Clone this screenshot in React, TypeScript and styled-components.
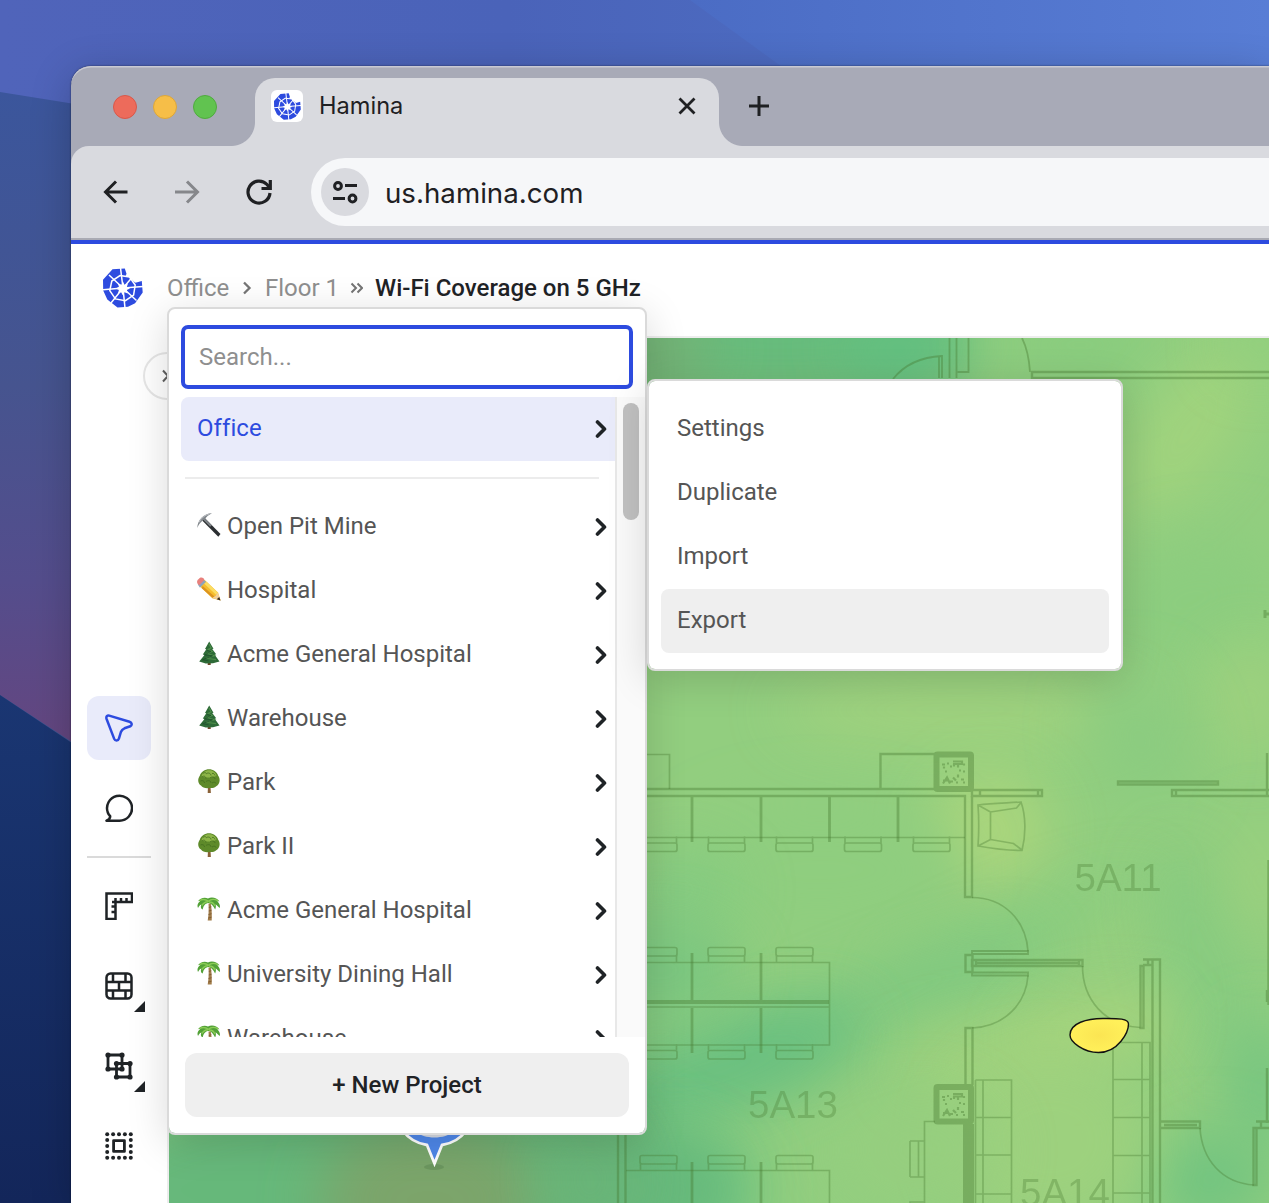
import React from "react";
import styled, { createGlobalStyle, css } from "styled-components";

const GlobalStyle = createGlobalStyle`
  *, *::before, *::after { box-sizing: border-box; }
  body { margin: 0; font-family: Roboto, "Liberation Sans", sans-serif; overflow: hidden; }
  svg { display: block; flex: none; }
  button { font: inherit; border: 0; background: none; padding: 0; }
`;

const colors = {
  brand: "#2d4bdf",
  brandSoft: "#e9ebfa",
  ink: "#1f2326",
  text: "#555555",
  muted: "#8f8f8f",
  line: "#dadada",
};

/* ---------- Desktop and browser window ---------- */

const Desktop = styled.div`
  position: relative;
  display: flex;
  width: 1269px;
  height: 1203px;
  padding: 66px 0 0 71px;
  overflow: hidden;
  background: #3d5592;
`;

const Wallpaper = styled.svg`
  position: absolute;
  inset: 0;
`;

const BrowserWindow = styled.div`
  position: relative;
  flex: 1;
  display: flex;
  flex-direction: column;
  border-radius: 20px 0 0 0;
  background: #a8aab7;
  box-shadow: 0 0 2px rgba(0, 0, 0, 0.55), 0 8px 40px rgba(0, 0, 0, 0.22);
`;

const TabStrip = styled.div`
  display: flex;
  height: 80px;
  padding: 12px 0 0 42px;
  border-radius: 20px 0 0 0;
  box-shadow: inset 0 2px 0 -0.5px #c9cad3;
`;

const TrafficLights = styled.div`
  display: flex;
  gap: 16px;
  width: 142px;
  padding-top: 17px;
`;

const Light = styled.span<{ $fill: string; $edge: string }>`
  width: 24px;
  height: 24px;
  border-radius: 50%;
  border: 1px solid ${(p) => p.$edge};
  background: ${(p) => p.$fill};
`;

const Tab = styled.div`
  position: relative;
  display: flex;
  align-items: center;
  width: 464px;
  height: 68px;
  padding: 0 20px 12px 16px;
  border-radius: 20px 20px 0 0;
  background: #d9dadf;

  &::before,
  &::after {
    content: "";
    position: absolute;
    bottom: 0;
    width: 24px;
    height: 24px;
  }
  &::before {
    left: -24px;
    background: radial-gradient(circle at 0 0, transparent 23.5px, #d9dadf 24.5px);
  }
  &::after {
    right: -24px;
    background: radial-gradient(circle at 100% 0, transparent 23.5px, #d9dadf 24.5px);
  }
`;

const Favicon = styled.span`
  display: grid;
  place-items: center;
  width: 32px;
  height: 32px;
  border-radius: 6px;
  background: #fff;
`;

const TabTitle = styled.span`
  flex: 1;
  margin-left: 16px;
  font: 400 23.6px/32px Inter, sans-serif;
  color: #1f2023;
`;

const NewTab = styled.button`
  width: 24px;
  height: 24px;
  margin: 16px 0 0 28px;
`;

const Toolbar = styled.div`
  display: flex;
  align-items: center;
  height: 94px;
  padding-left: 30px;
  border-bottom: 2px solid #a9aab3;
  border-radius: 18px 0 0 0;
  background: #d9dadf;
`;

const NavIcons = styled.div`
  display: flex;
  gap: 44px;
  width: 210px;
`;

const AddressBar = styled.div`
  flex: 1;
  display: flex;
  align-items: center;
  height: 68px;
  padding-left: 10px;
  border-radius: 34px 0 0 34px;
  background: #f6f7f9;
`;

const SiteInfo = styled.span`
  display: grid;
  place-items: center;
  width: 48px;
  height: 48px;
  border-radius: 50%;
  background: #d9dadf;
`;

const Url = styled.span`
  margin-left: 16px;
  padding-top: 1px;
  font: 400 27.7px/36px Inter, sans-serif;
  color: #1f2023;
`;

/* ---------- Application shell ---------- */

const AppShell = styled.div`
  position: relative;
  flex: 1;
  display: flex;
  flex-direction: column;
  border-top: 4px solid ${colors.brand};
  background: #fff;
`;

const Header = styled.header`
  display: flex;
  align-items: center;
  height: 92px;
  padding: 0 0 4px 32px;
`;

const Breadcrumbs = styled.nav`
  display: flex;
  align-items: center;
  margin-left: 24px;
  font-size: 24px;
  line-height: 32px;
  color: ${colors.muted};
`;

const Crumb = styled.span<{ $current?: boolean; $width: number }>`
  width: ${(p) => p.$width}px;
  white-space: nowrap;
  ${(p) =>
    p.$current &&
    css`
      font-weight: 500;
      color: ${colors.ink};
    `}
`;

const CrumbMark = styled.svg`
  margin: 0 12px;
`;

const Body = styled.div`
  flex: 1;
  display: flex;
  min-height: 0;
`;

const Sidebar = styled.aside`
  position: relative;
  display: flex;
  flex-direction: column;
  align-items: center;
  gap: 16px;
  width: 98px;
  padding: 360px 0 0;
  border-right: 2px solid #ededed;
`;

const Tool = styled.button<{ $active?: boolean }>`
  position: relative;
  display: grid;
  place-items: center;
  flex: none;
  width: 64px;
  height: 64px;
  border-radius: 12px;
  color: ${(p) => (p.$active ? colors.brand : colors.ink)};
  background: ${(p) => (p.$active ? colors.brandSoft : "transparent")};
`;

const MoreCorner = styled.span`
  position: absolute;
  right: 6px;
  bottom: 6px;
  width: 11px;
  height: 11px;
  background: ${colors.ink};
  clip-path: polygon(100% 0, 100% 100%, 0 100%);
`;

const ToolDivider = styled.hr`
  width: 64px;
  height: 2px;
  margin: 0;
  border: 0;
  background: ${colors.line};
`;

const ExpandButton = styled.button`
  position: absolute;
  top: 16px;
  left: 72px;
  display: grid;
  place-items: center;
  width: 48px;
  height: 48px;
  border: 2px solid #e6e6e6;
  border-radius: 50%;
  background: #fff;
`;

/* ---------- Menus ---------- */

const menuSurface = css`
  position: absolute;
  border: 2px solid ${colors.line};
  border-radius: 8px;
  background: #fff;
  background-clip: padding-box;
`;

const ProjectMenu = styled.div`
  ${menuSurface}
  top: 63px;
  left: 96px;
  display: flex;
  flex-direction: column;
  width: 480px;
  height: 828px;
  padding: 16px 0 16px 12px;
  box-shadow: 0 8px 40px rgba(0, 0, 0, 0.15);
`;

const SearchInput = styled.input`
  flex: none;
  width: 452px;
  height: 64px;
  padding: 0 14px;
  border: 4px solid ${colors.brand};
  border-radius: 7px;
  outline: 0;
  font: 400 24px/32px Roboto, sans-serif;
  background: #fff;
  &::placeholder { color: ${colors.muted}; opacity: 1; }
`;

const ScrollArea = styled.div`
  display: flex;
  height: 640px;
  margin-top: 8px;
  overflow: hidden;
`;

const ProjectList = styled.div`
  width: 434px;
`;

const ScrollTrack = styled.div`
  flex: 1;
  padding: 6px 0 0 6px;
  border-left: 2px solid #e8e8e8;
  background: #fafafa;
`;

const ScrollThumb = styled.div`
  width: 16px;
  height: 117px;
  border-radius: 8px;
  background: #c1c1c1;
`;

const MenuRow = styled.div<{ $tone?: "selected" | "hover" }>`
  display: flex;
  align-items: center;
  height: 64px;
  padding: 0 8px 2px 16px;
  border-radius: ${(p) => (p.$tone === "selected" ? "8px 0 0 8px" : "8px")};
  font-size: 24px;
  line-height: 32px;
  letter-spacing: ${(p) => (p.$tone === "selected" ? "0.08px" : "0")};
  color: ${(p) => (p.$tone === "selected" ? colors.brand : colors.text)};
  background: ${(p) =>
    p.$tone === "selected" ? colors.brandSoft : p.$tone === "hover" ? "#efefef" : "transparent"};
`;

const RowLabel = styled.span`
  flex: 1;
  white-space: nowrap;
`;

const RowIcon = styled.svg`
  width: 24px;
  height: 24px;
  margin: 0 6px 2px 0;
`;

const ListDivider = styled.hr`
  width: 414px;
  height: 2px;
  margin: 16px 0 16px 4px;
  border: 0;
  background: #ececec;
`;

const NewProject = styled.button`
  width: 444px;
  height: 64px;
  flex: none;
  margin: 16px 0 0 4px;
  border-radius: 12px;
  background: #efefef;
  font: 500 24px/32px Roboto, sans-serif;
  color: ${colors.ink};
`;

const ActionMenu = styled.div`
  ${menuSurface}
  top: 135px;
  left: 576px;
  width: 476px;
  padding: 16px 12px;
  box-shadow: 0 8px 40px rgba(0, 0, 0, 0.15);
`;

/* ---------- Icons ---------- */

const HaminaMark = ({ size }: { size: number }) => (
  <svg width={size} height={size} viewBox="0 0 40 40">
    <path
      d="M9.500 1.300 21.800.4l1.700 5.300-1 2.800 3.500.3 4.800 4.700 1.700 1.200 6.300-1.700.9 11.500-7.600 10.700L25 38.800l-10.500.8L4.300 31.500.2 22.500 0 11.800z"
      fill={colors.brand}
    />
    <g fill="none" stroke="#fff" strokeWidth="1.500">
      <path d="M20 20 17.500 0M20 20 6 7M20 20 0 21.800M20 20 8 35M20 20l2 20M20 20l13.500 12.500M20 20l20-1.500M20 20l9.500-11" />
      <path d="M17 7.600 26.500 9l5.700 8-1.600 10-8.200 5.700-10-1.800-5.600-8.200L8.800 13z" />
    </g>
    <path d="m20 13.500 1.500 3.300 3.400-1.400-1 3.500 3.100 1.500-3.200 1.500 1 3.500-3.400-1.200-1.600 3-1.700-3-3.200 1.200 1-3.500-3.200-1.500 3.200-1.600-.9-3.300 3.400 1.200z" fill="#fff" />
  </svg>
);

const Arrow = ({ flip, color }: { flip?: boolean; color: string }) => (
  <svg width="28" height="28" viewBox="0 0 28 28" fill="none" stroke={color} strokeWidth="3">
    <path d={flip ? "M2 14h22M14 3.500 24.500 14 14 24.500" : "M26.500 14H4.500M15 3.500 4.500 14 15 24.500"} />
  </svg>
);

const RowChevron = () => (
  <svg width="12" height="20" viewBox="0 0 12 20" fill="none" stroke={colors.ink} strokeWidth="3.600" strokeLinecap="round" strokeLinejoin="round">
    <path d="m2.500 4 7 7-7 7" />
  </svg>
);

type EmojiName = "pick" | "pencil" | "pine" | "tree" | "palm";

const Emoji = ({ name }: { name: EmojiName }) => (
  <RowIcon viewBox="0 0 24 24">
    {name === "pick" && (
      <>
        <path d="M7.500 4.800 23.500 21l-2.200 2.800L5.200 7.500z" fill="#2b2e31" />
        <path d="M6.500 5.500 14 13" stroke="#7c8186" strokeWidth="2.200" />
        <path d="M.3 15C.3 7.500 6.500.3 15 .3 11 2.200 9.500 4 8 6 4.800 8 2.300 10 .3 15z" fill="#80868b" />
        <path d="M2 9.500C4 5 8 2 12 1.200" stroke="#c9ccd0" strokeWidth=".8" fill="none" />
      </>
    )}
    {name === "pencil" && (
      <>
        <path d="m7.500 2.800 13.500 12.600 2.700 8-8.400-2.200L2 8.500z" fill="#f6bd2d" />
        <path d="m9.500 4.800 11.500 11-2 2L7 6.600z" fill="#fbdc62" />
        <path d="m4.500 11 11.500 10.200 1.700-1.500L5.700 9z" fill="#dc9420" />
        <path d="m20.800 15.600 2.800 7.900-8.200-2.700 3-1.700z" fill="#f0cf9c" />
        <path d="m22.300 20 1.200 3.500-3.800-1.200z" fill="#33291f" />
        <path d="m6 2.200 3 2.600-6 6L.8 7.500z" fill="#8da4bd" />
        <path d="M3 .8C5-.2 7.300 1.200 7.300 3L2.500 8C.4 7.800-.6 5 .6 3z" fill="#e8807c" />
      </>
    )}
    {name === "pine" && (
      <>
        <path d="M10.700 19h3v5h-3z" fill="#6b4527" />
        <path d="m12.200.5 4.300 7.300-1.300.2 4 5.200-1.500.5 4.800 6.800-6.500 1.700-7.300.2-6.500-2L7.500 14l-1.700-.5L9.300 8.200 8 8z" fill="#2d6a37" />
        <path d="m12 3 2.200 4-3 1.200 4.300 2.300-5.500 2 7.600 2.200-8.500 2.600 10 1.300" fill="none" stroke="#4d8c49" strokeWidth="1.100" />
        <path d="m10 9.500 4 .8-6.500 3.700 8 .8-10 4 6 1" fill="none" stroke="#20502c" strokeWidth=".8" />
      </>
    )}
    {name === "tree" && (
      <>
        <path d="M11 17h2.400l.5 7h-3.200z" fill="#8a6238" />
        <path d="M12 .2c4 0 8 2.600 9.200 6.500 2.500 3.300 1.700 8.200-1.600 10.300-2.300 2.200-5 2.300-7.300 2-3.500.6-6.700-.2-8.300-2.400C.6 14.500.5 9.500 2.800 6.700 4 2.600 8 .2 12 .2z" fill="#5e8a2a" />
        <path d="M12 1.200c3.500 0 6.500 2 7.500 5.300-3 2.500-11 2.700-15 .8C5.500 3.500 8.300 1.200 12 1.200z" fill="#8db548" />
        <path d="M5 8c2-2 4 0 4 1.500M9 5c2-2 5-.5 5 1.500M13 9c2-2 5-1 5 1M3.500 12c2-1 4 0 4 2M9 12.500c2-1.500 5-1 5 1.500M15 14c2-1.500 4-.5 4 .5M6 4.500c1-1 2-1 3-.5M15 4.500c1.500-.5 2.500.5 3 2" fill="none" stroke="#436d20" strokeWidth=".8" />
      </>
    )}
    {name === "palm" && (
      <>
        <path d="M11.500 6.500h2.300c1 5.500 1.200 11.500.9 17h-4c1-6 1.200-11 .8-17z" fill="#a17c4a" />
        <path d="m11.800 10.500 2.500-.8M11.800 14l2.800-.8M11.500 17.500l3-.8M11.300 21l3.200-.8" stroke="#725029" strokeWidth=".7" />
        <path d="M12 6C9 6 6.500 8 5.700 12.500 3.500 11.500 3.500 9 4.500 7.500 2.500 8 1.800 9.500 1 11-.3 8.500 1 5.500 3.200 4.200 2.500 4 1.500 4 .7 4.500 3 1 7.500-.2 11 1.400 14.500-.5 20 .5 22.500 4.500c-.8-.3-1.500-.3-2.200 0 2 1.500 3.200 4 2.400 6.500-1.500-1-3-3.200-4.200-3.700.8 1.700.3 3.700-.4 5.200C16.500 9.500 15 6.700 12 6z" fill="#52a137" />
        <path d="M2.500 3.600C6 1.800 9 2.500 11.500 4.300 14 2 18 2 21 3.900M5 8.500c1-2 3-3.500 6-3.700M18 9c-1-2.500-3-4-6-4" fill="none" stroke="#8acb55" strokeWidth="1.400" />
      </>
    )}
  </RowIcon>
);

const stroke28 = {
  width: 28,
  height: 28,
  viewBox: "0 0 28 28",
  fill: "none",
  stroke: "currentColor",
  strokeWidth: 2.5,
  strokeLinejoin: "round" as const,
};

const CursorIcon = () => (
  <svg {...stroke28}>
    <path d="M4.200 1.600 24.500 7.700c2.600.9 2.900 3.500.8 4.600l-5.800 2c-2 .8-3 2-3.600 3.700l-2 6.700c-.8 2.500-3.800 2.500-4.700.2L1.500 4.700C.9 2.600 2.300 1 4.200 1.600z" />
  </svg>
);

const CommentIcon = () => (
  <svg {...stroke28}>
    <path d="M1.500 26.700h13A12.500 12.500 0 1 0 2.800 18.500c.5 1.500 1.200 2.500 2.400 3.700 0 2-1.200 3.500-3.700 4.500z" />
  </svg>
);

const RulerIcon = () => (
  <svg {...stroke28} strokeLinejoin="miter">
    <path d="M1.500 1.500h25.500v8.500H10.500V27h-9z" />
    <path d="M10.500 9.500V6M16 9.500V6M21.500 9.500V6M10.500 14.500H6.500M10.500 20H6.500M10.500 10H7" />
  </svg>
);

const BrickIcon = () => (
  <svg {...stroke28}>
    <rect x="1.500" y="1.500" width="25" height="25" rx="4" />
    <path d="M1.500 10h25M1.500 18.500h25M8 2v8M20.500 2v8M14 10v8.500M8 18.500v8M20.500 18.500v8" />
  </svg>
);

const GroupIcon = () => (
  <svg {...stroke28} strokeWidth={2.8}>
    <path d="M3 3h14v14H3zM11.500 11.500H25V25H11.500z" />
    <g fill="currentColor" stroke="none">
      {[[3, 3], [17, 3], [3, 17], [17, 17], [11.5, 11.5], [25, 11.5], [11.5, 25], [25, 25]].map(([x, y]) => (
        <circle key={`${x}-${y}`} cx={x} cy={y} r="2.600" />
      ))}
    </g>
  </svg>
);

const SelectIcon = () => {
  const steps = [2.2, 8.1, 14, 19.9, 25.8];
  return (
    <svg {...stroke28}>
      <rect x="8.600" y="8.600" width="10.800" height="10.800" strokeWidth="2.800" />
      <g fill="currentColor" stroke="none">
        {steps.flatMap((x) =>
          steps
            .filter((y) => x === 2.2 || x === 25.8 || y === 2.2 || y === 25.8)
            .map((y) => <circle key={`${x}-${y}`} cx={x} cy={y} r="2" />)
        )}
      </g>
    </svg>
  );
};

/* ---------- Floor plan ---------- */

const MapPane = styled.main`
  flex: 1;
  border-top: 2px solid #ededed;
`;

type Blob = [cx: number, cy: number, rx: number, ry: number, fill: string, rotate?: number, opacity?: number];

const heat: Blob[] = [
  [780, 340, 200, 60, "#66bb7c", 0, 1],
  [650, 350, 60, 50, "#73b074"],
  [900, 350, 60, 40, "#62c080"],
  [1080, 345, 90, 36, "#88cc7e"],
  [1190, 430, 40, 100, "#a6d57d", 35, 0.8],
  [1260, 345, 40, 30, "#92d07e", 0, 0.7],
  [1190, 600, 90, 60, "#8ccd7f", -20],
  [960, 710, 180, 36, "#a4d37e", 0, 0.75],
  [1250, 700, 40, 60, "#a0d27e", 0, 0.8],
  [1140, 740, 50, 70, "#8bcc80", -20],
  [990, 830, 60, 60, "#b2d87c", 0, 0.75],
  [820, 870, 140, 70, "#8fce7f"],
  [680, 890, 60, 40, "#80c981", 0, 0.7],
  [1110, 925, 50, 24, "#a2d27d", -20, 0.7],
  [1020, 935, 150, 26, "#86cb80", -22, 0.8],
  [880, 1000, 170, 30, "#7cc780", -20, 0.8],
  [720, 1070, 150, 48, "#65be80", -18, 0.85],
  [660, 970, 80, 50, "#74c480", 0, 0.8],
  [1205, 960, 40, 120, "#86cb80", -18, 0.9],
  [1260, 880, 18, 60, "#a0d27e"],
  [1260, 1090, 30, 70, "#72c481"],
  [1210, 1180, 60, 50, "#72c480"],
  [980, 1060, 80, 36, "#a6d47d", -8, 0.7],
  [1095, 1030, 80, 34, "#b0d77b", -10, 0.7],
  [1050, 1140, 100, 90, "#a0d27e", 0, 0.8],
  [920, 1150, 80, 60, "#97cf7f", 0, 0.8],
  [680, 1190, 80, 60, "#66bf80", 0, 0.9],
  [400, 1190, 320, 110, "#66b87a"],
  [430, 1200, 110, 80, "#7ca46b"],
  [590, 1180, 40, 60, "#6bb277", 0, 0.8],
];

const Chair = ({ x, y, up }: { x: number; y: number; up?: boolean }) => (
  <g>
    <rect x={x} y={y} width="37" height="8.500" rx="2" />
    <path d={up ? `M${x + 0.5} ${y + 8}v7M${x + 36.5} ${y + 8}v7` : `M${x + 0.5} ${y}v-6.500M${x + 36.5} ${y}v-6.500`} />
  </g>
);

const speckle = "M1 6h3M6 5h2M12 3h9v2.500h-9M17 6v3M2 22h5M3 8v2M9 8h2M13 5v3M22 13h2M2 25l4-6 3 6M9 23h3M17 16v3M20 21h3M12 19l3 3M23 5v2M4 13h2M15 24h2M18 12h2M22 24h2";

const Column = ({ x, y }: { x: number; y: number }) => (
  <g>
    <rect x={x} y={y} width="34.500" height="34.500" rx="1" strokeWidth="6" />
    <path d={speckle} transform={`translate(${x + 4.5} ${y + 4})`} strokeWidth="2.200" />
  </g>
);

const FloorPlan = () => (
  <MapPane>
    <svg width="1100" height="865" viewBox="169 338 1100 865">
      <defs>
        <filter id="soft" x="-150%" y="-150%" width="400%" height="400%">
          <feGaussianBlur stdDeviation="28" />
        </filter>
        <radialGradient id="peak">
          <stop offset="0" stopColor="#fbe553" />
          <stop offset="1" stopColor="#fff05a" />
        </radialGradient>
      </defs>
      <rect x="169" y="338" width="1100" height="865" fill="#92ce7f" />
      {heat.map(([cx, cy, rx, ry, fill, rotate = 0, opacity = 1], i) => (
        <g key={i} filter="url(#soft)" opacity={opacity}>
          <ellipse cx={cx} cy={cy} rx={rx} ry={ry} fill={fill} transform={`rotate(${rotate} ${cx} ${cy})`} />
        </g>
      ))}

      <g fill="none" stroke="#46782f" opacity=".38" strokeWidth="2.400">
        <path d="M949.500 338v40M956.500 338v40M968.500 338v34h-11M939 356v22M893 379c12-15 28-22 49-23v22M1022 338c4 8 7 18 8 34" strokeWidth="1.800" />
        <path d="M1269 372h-237v6h237" />
        <path d="M640 789h295M640 796h325v101h7V796M880.500 789v-35H935" />
        <path d="M692 797v45M761 797v45M829.500 797v45M898 797v45M692 953v47M761 953v47M692 1008v45M761 1008v45M692 1162v41M761 1162v41" strokeWidth="2.800" />
        <path d="M640 1002h189" strokeWidth="3.800" />
        <Column x={936.5} y={754.5} />
        <Column x={936.5} y={1087} />
        <path d="M968.500 1124v79" strokeWidth="11" />
        <path d="M972 790h70v6h-70zM980 790v6M1038 790v6M1118 781.500h100v3h-100zM1269 790h-97v6h97M1176 790v6M1267 753v43" />
        <path d="M972 951h56v3h-56zM972 972.500h56v3h-56z" strokeWidth="1.800" />
        <path d="M965.500 955h7v17h-7zM972 960h110.500v6H972zM976 963h103M976 960v6M1079 960v6" />
        <path d="M1140.500 966h3v62h-3zM1143 959.500h9M1143 965h9M1152.500 1203V959.500h7.500V1203M1148 960v5" />
        <path d="M965.500 1085v-57h7v57M1160 1121.500h40v6.500h-40M1164 1125h33M1253.500 1128h3v57h-3zM1256 1121.500h13M1256 1128h13M1261 1122v6M618 1135v68M625.500 1135v68" />
        <path d="M1268.500 860v145M1267 990v12M1267 1068v55" strokeWidth="2.500" />
        <path d="M1264 614h5M1265 610v8" strokeWidth="3" />
      </g>

      <g fill="none" stroke="#46782f" opacity=".34" strokeWidth="1.700">
        <path d="M640 754.500h29.500V789M640 837.500h325" />
        {[640, 708, 776, 844.5, 913].map((x) => <Chair key={x} x={x} y={843} />)}
        {[640, 708, 776].map((x) => (
          <React.Fragment key={x}>
            <Chair x={x} y={947.5} up />
            <Chair x={x} y={1050.5} />
            <Chair x={x} y={1155.5} up />
          </React.Fragment>
        ))}
        <path d="M640 962.500h189.500v82.500H640M640 1007h189M626 1170.500h203.500v33" />
        <path d="M978 805c14-2 30-2 43-3 5 14 5 33 1 48.500-14 0-30-2-44-4.500 1-14 1-27 0-41zM978 805l12.500 7v27.500L978 846M990.500 812l26-4 5-6M990.500 839.500l23 4 9 7" />
        <path d="M972 897.500c31 0 54 22 56 54M1028 975.500c-2 28-23 51-56 52.500M1082.500 966c0 33 22 60 58 61.500M1200 1128c2 32 22 55 54 57" />
        <path d="M975.500 1080h36v123M975.500 1080v123M983 1080v123M975.500 1117.500h36M975.500 1155h36M975.500 1194h36" />
        <path d="M1113 1203v-160.500h37V1203M1142 1043v160M1113 1079.500h37M1113 1117.500h37M1113 1155.500h37M1113 1193h37" />
        <path d="M935 1121.500h-10.500V1203M910 1141h14M910 1177h14M910 1141v36M918.500 1141v36M910 1203v-1h14" />
      </g>

      <g fill="#46782f" opacity=".3" fontFamily="Liberation Sans, Arial, sans-serif" fontSize="38.500">
        <text x="1074.500" y="891">5A11</text>
        <text x="748" y="1118">5A13</text>
        <text x="1020" y="1206">5A14</text>
      </g>

      <path
        d="M1070 1035c0-12 17-16.500 33-16.500 13 0 25.500-.5 25.500 5.500 0 8-10 28.500-30 28.500-15 0-28.500-10.500-28.500-17.500z"
        fill="url(#peak)"
        stroke="#111"
        strokeWidth="1.400"
      />
      <ellipse cx="434" cy="1167" rx="10" ry="3" fill="#3f6d3d" opacity=".25" />
      <path
        d="M434.500 1163.500 427 1145C417 1143.500 409 1139 403 1131h63c-6 8-14 12.500-24 14z"
        fill="#4f88ea"
        stroke="#fff"
        strokeWidth="2.800"
      />
      <path d="M414 1131c6 4.500 13 6.500 20.500 6.500s14.500-2 20.500-6.500z" fill="#d6dae2" />
    </svg>
  </MapPane>
);

/* ---------- Page ---------- */

const projects: { icon: EmojiName; label: string }[] = [
  { icon: "pick", label: "Open Pit Mine" },
  { icon: "pencil", label: "Hospital" },
  { icon: "pine", label: "Acme General Hospital" },
  { icon: "pine", label: "Warehouse" },
  { icon: "tree", label: "Park" },
  { icon: "tree", label: "Park II" },
  { icon: "palm", label: "Acme General Hospital" },
  { icon: "palm", label: "University Dining Hall" },
  { icon: "palm", label: "Warehouse" },
];

const actions = ["Settings", "Duplicate", "Import", "Export"];

export default function App() {
  return (
    <Desktop>
      <GlobalStyle />
      <Wallpaper width="1269" height="1203" viewBox="0 0 1269 1203">
        <defs>
          <linearGradient id="sky" x1="0" y1="0" x2="1" y2="0">
            <stop offset="0" stopColor="#5064ba" />
            <stop offset=".4" stopColor="#4a63b9" />
            <stop offset="1" stopColor="#5077cc" />
          </linearGradient>
          <linearGradient id="facet" x1="0" y1="0" x2="1" y2="0">
            <stop offset="0" stopColor="#4b6cc4" />
            <stop offset="1" stopColor="#587dd5" />
          </linearGradient>
          <linearGradient id="flank" x1="0" y1="0" x2="0" y2="1">
            <stop offset="0" stopColor="#3b569c" />
            <stop offset=".45" stopColor="#46548f" />
            <stop offset=".75" stopColor="#544d8c" />
            <stop offset="1" stopColor="#644680" />
          </linearGradient>
          <linearGradient id="deep" x1="0" y1="0" x2="0" y2="1">
            <stop offset="0" stopColor="#1a3672" />
            <stop offset="1" stopColor="#13265a" />
          </linearGradient>
        </defs>
        <rect width="1269" height="110" fill="url(#sky)" />
        <path d="M690 0h579v80H800z" fill="url(#facet)" />
        <path d="M0 92l75 12v640L0 695z" fill="url(#flank)" />
        <path d="M0 695l75 50v458H0z" fill="url(#deep)" />
      </Wallpaper>

      <BrowserWindow>
        <TabStrip>
          <TrafficLights>
            <Light $fill="#ed6b5b" $edge="#d8584a" />
            <Light $fill="#f6be48" $edge="#dca63a" />
            <Light $fill="#61c350" $edge="#4fab3e" />
          </TrafficLights>
          <Tab>
            <Favicon><HaminaMark size={27} /></Favicon>
            <TabTitle>Hamina</TabTitle>
            <svg width="24" height="24" viewBox="0 0 24 24" stroke="#1f2023" strokeWidth="2.800">
              <path d="m4.500 4.500 15 15M19.500 4.500l-15 15" />
            </svg>
          </Tab>
          <NewTab>
            <svg width="24" height="24" viewBox="0 0 24 24" stroke="#1f2023" strokeWidth="3">
              <path d="M12 2v20M2 12h20" />
            </svg>
          </NewTab>
        </TabStrip>

        <Toolbar>
          <NavIcons>
            <Arrow color="#1f2023" />
            <Arrow flip color="#86878b" />
            <svg width="28" height="28" viewBox="0 0 28 28" fill="none" stroke="#1f2023" strokeWidth="3.200">
              <path d="M25 15A11 11 0 1 1 22 6.500l2.500 3" />
              <path d="M25.300 2v8.500H16.500" />
            </svg>
          </NavIcons>
          <AddressBar>
            <SiteInfo>
              <svg width="26" height="24" viewBox="0 0 26 24" fill="none" stroke="#1f2023" strokeWidth="3">
                <circle cx="6" cy="6" r="3.400" />
                <path d="M13 5.500h12M1 18.500h12" />
                <circle cx="20.500" cy="18.500" r="3.400" />
              </svg>
            </SiteInfo>
            <Url>us.hamina.com</Url>
          </AddressBar>
        </Toolbar>

        <AppShell>
          <Header>
            <HaminaMark size={40} />
            <Breadcrumbs>
              <Crumb $width={62}>Office</Crumb>
              <CrumbMark width="12" height="16" viewBox="0 0 12 16" fill="none" stroke="#757575" strokeWidth="2.300">
                <path d="m3 2.500 5.500 5.500L3 13.500" />
              </CrumbMark>
              <Crumb $width={73}>Floor 1</Crumb>
              <CrumbMark width="13" height="16" viewBox="0 0 13 16" fill="none" stroke="#757575" strokeWidth="2">
                <path d="m1.500 3.500 4.500 4.500-4.500 4.500M7.500 3.500 12 8l-4.500 4.500" />
              </CrumbMark>
              <Crumb $width={266} $current>Wi-Fi Coverage on 5 GHz</Crumb>
            </Breadcrumbs>
          </Header>
          <Body>
            <Sidebar>
              <ExpandButton>
                <svg width="12" height="16" viewBox="0 0 12 16" fill="none" stroke="#606060" strokeWidth="2">
                  <path d="m2 2.500 5 5.500-5 5.500" />
                </svg>
              </ExpandButton>
              <Tool $active><CursorIcon /></Tool>
              <Tool><CommentIcon /></Tool>
              <ToolDivider />
              <Tool><RulerIcon /></Tool>
              <Tool><BrickIcon /><MoreCorner /></Tool>
              <Tool><GroupIcon /><MoreCorner /></Tool>
              <Tool><SelectIcon /></Tool>
            </Sidebar>
            <FloorPlan />
          </Body>

          <ProjectMenu>
            <SearchInput placeholder="Search..." />
            <ScrollArea>
              <ProjectList>
                <MenuRow $tone="selected">
                  <RowLabel>Office</RowLabel>
                  <RowChevron />
                </MenuRow>
                <ListDivider />
                {projects.map((p, i) => (
                  <MenuRow key={i}>
                    <Emoji name={p.icon} />
                    <RowLabel>{p.label}</RowLabel>
                    <RowChevron />
                  </MenuRow>
                ))}
              </ProjectList>
              <ScrollTrack><ScrollThumb /></ScrollTrack>
            </ScrollArea>
            <NewProject>+ New Project</NewProject>
          </ProjectMenu>

          <ActionMenu>
            {actions.map((a) => (
              <MenuRow key={a} $tone={a === "Export" ? "hover" : undefined}>
                <RowLabel>{a}</RowLabel>
              </MenuRow>
            ))}
          </ActionMenu>
        </AppShell>
      </BrowserWindow>
    </Desktop>
  );
}
